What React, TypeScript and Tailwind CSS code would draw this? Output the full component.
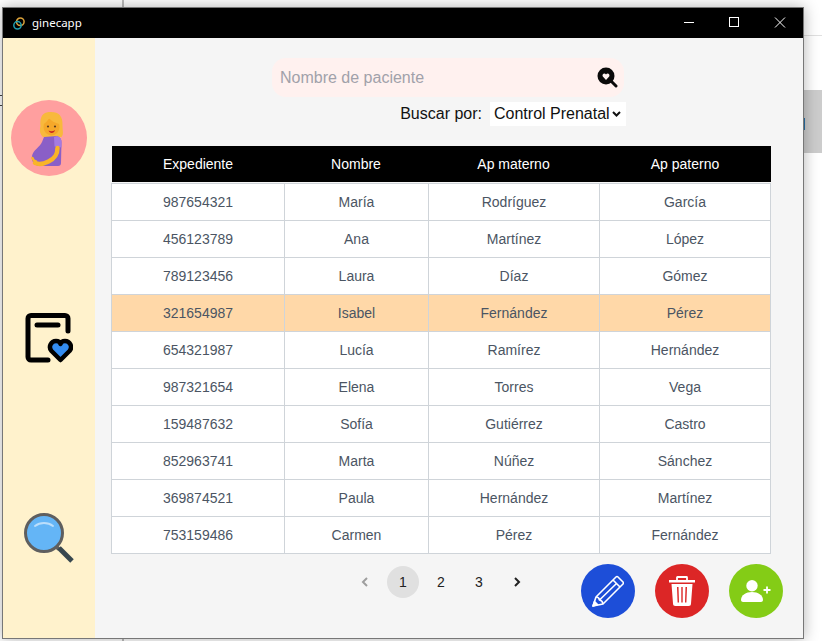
import React from "react";

const rows = [
  ["987654321", "María", "Rodríguez", "García"],
  ["456123789", "Ana", "Martínez", "López"],
  ["789123456", "Laura", "Díaz", "Gómez"],
  ["321654987", "Isabel", "Fernández", "Pérez"],
  ["654321987", "Lucía", "Ramírez", "Hernández"],
  ["987321654", "Elena", "Torres", "Vega"],
  ["159487632", "Sofía", "Gutiérrez", "Castro"],
  ["852963741", "Marta", "Núñez", "Sánchez"],
  ["369874521", "Paula", "Hernández", "Martínez"],
  ["753159486", "Carmen", "Pérez", "Fernández"],
];

function Logo() {
  return (
    <svg width="12" height="13" viewBox="0 0 12 13" fill="none">
      <circle cx="7.300" cy="4.800" r="3.800" stroke="#dba23a" strokeWidth="1.500" />
      <circle cx="4.500" cy="8.300" r="3.700" stroke="#1f9fb0" strokeWidth="1.500" />
    </svg>
  );
}

function Pregnant() {
  return (
    <svg width="50" height="65" viewBox="0 0 50 65">
      <path d="M16.500 20C15.500 8 21 6 27 6c8 0 12 4 11.500 14 0 5 1.500 8-1 11H19c-3.500-3-3.500-7-2.500-11z" fill="#f8b93c" />
      <ellipse cx="27.500" cy="21" rx="8" ry="8.500" fill="#f5a82a" />
      <path d="M19 18c3-1 5-4 6-6 2 3 6 5 10.500 6l-1-8-6-2-7 2z" fill="#f8b93c" />
      <circle cx="24" cy="20.500" r="1.100" fill="#5b3a1e" />
      <circle cx="31" cy="20.500" r="1.100" fill="#5b3a1e" />
      <path d="M24.500 24.500c2 1 4.500 1 6.500-.5-.5 3.500-5.500 4-6.500.5z" fill="#c8281e" />
      <path d="M20 31l13-1c3 1 4.500 3 4.500 6L37 57c0 2-1 3-3 3H17C10 60 7 55 8 50c1-6 8-9 10-14z" fill="#8a5fc7" />
      <path d="M30 31l3-1c3 1 4.500 3 4.500 6v5.500l-7-1z" fill="#a47be2" />
      <path d="M33.500 42c0 6-2 10-9 13.500-5 2.500-10 3-13.500 1.500" fill="none" stroke="#f9b428" strokeWidth="4.500" strokeLinecap="round" />
      <path d="M8.500 52c.5 2 1.500 3 3.500 3.500" fill="none" stroke="#f9b428" strokeWidth="2.500" strokeLinecap="round" />
    </svg>
  );
}

function ClipHeart() {
  return (
    <svg width="48" height="50" viewBox="0 0 48 50" fill="none">
      <path d="M23 47H6a3 3 0 0 1-3-3V5.500a3 3 0 0 1 3-3h34a3 3 0 0 1 3 3V18" stroke="#000" strokeWidth="5" strokeLinecap="round" />
      <path d="M12 12h21" stroke="#000" strokeWidth="5" strokeLinecap="round" />
      <path d="M35.500 47l-9-9c-3.500-4-.5-10 4.500-10 2 0 4 1 4.500 3 .5-2 2.500-3 4.500-3 5 0 8 6 4.500 10z" fill="#338cf0" stroke="#000" strokeWidth="4.500" strokeLinejoin="round" />
    </svg>
  );
}

function BigSearch() {
  return (
    <svg width="50" height="50" viewBox="0 0 50 50" fill="none">
      <path d="M31 33l4 3" stroke="#5f5f5f" strokeWidth="4" />
      <path d="M35 35l13 13" stroke="#37474f" strokeWidth="5" />
      <circle cx="20" cy="20" r="18.500" fill="#64b5f6" stroke="#5f5f5f" strokeWidth="3" />
      <path d="M11 13c5-4 13-4 18 0" stroke="#bbdefb" strokeWidth="2" strokeLinecap="round" />
    </svg>
  );
}

function SmallSearch() {
  return (
    <svg width="21" height="21" viewBox="0 0 21 21">
      <path d="M14 14l5 5" stroke="#0a0a0a" strokeWidth="3" strokeLinecap="round" />
      <circle cx="9" cy="9" r="8.500" fill="#0a0a0a" />
      <path d="M9 13L5.800 9.500C4.500 7.500 7.500 5.300 9 7.500 10.500 5.300 13.500 7.500 12.200 9.500z" fill="#fff3f1" />
    </svg>
  );
}

function Pencil() {
  return (
    <svg width="32" height="32" viewBox="0 0 32 32" fill="none" stroke="#fff" strokeWidth="1.600" strokeLinejoin="round">
      <path d="M1 31l3-9L24 2q1-1 2 0l5 5q1 1 0 2L11 29z" />
      <path d="M4 22q3 0 3.500 3 3 .5 3.500 4M21 5l7 7M7.500 25L25 8" />
      <path d="M1 31l1.500-4.500 3 3z" fill="#fff" />
    </svg>
  );
}

function Trash() {
  return (
    <svg width="26" height="30" viewBox="0 0 26 30" fill="#fff">
      <path d="M8 4V1.500q0-.5.500-.5h9q.5 0 .5.500V4" fill="none" stroke="#fff" strokeWidth="1.800" />
      <path d="M0 4h26v2.500H0z" />
      <path d="M2.500 8h21L22 27.500a2.500 2.500 0 0 1-2.500 2.500h-13A2.500 2.500 0 0 1 4 27.500zM8 11l.6 15.500h1.400L9.500 11zm4.300 0v15.500h1.400V11zm4.200 0L16 26.500h1.400L18 11z" fillRule="evenodd" />
    </svg>
  );
}

function UserPlus() {
  return (
    <svg width="30" height="22" viewBox="0 0 30 22" fill="#fff">
      <circle cx="11" cy="5.700" r="5.700" />
      <path d="M0 20c0-5 5-8 11-8s11 3 11 8c0 1-1 2-2 2H2c-1 0-2-1-2-2z" />
      <path d="M22.500 10h7M26 6.500v7" stroke="#fff" strokeWidth="1.800" />
    </svg>
  );
}

export default function App() {
  return (
    <div className="relative h-[641px] w-[822px] overflow-hidden bg-white font-['Liberation_Sans',sans-serif]">
      <div className="absolute left-[122px] top-0 h-full w-[2px] bg-[#bdbdbd]" />
      <div className="absolute left-0 top-[95px] h-[11px] w-[3px] border-y border-[#444]" />
      <div className="absolute right-0 top-[35px] h-px w-[30px] bg-[#e0e0e0]" />
      <div className="absolute right-0 top-[90px] h-[63px] w-[30px] bg-[#cccccc]" />
      <div className="absolute left-[803px] top-[118px] h-[12px] w-[2px] bg-[#2a72a8]" />

      <div className="absolute left-[2px] top-[7px] flex h-[632px] w-[802px] flex-col border border-[#777] shadow-[0_0_14px_rgba(0,0,0,0.3)]">
        <div className="flex h-[30px] shrink-0 items-center bg-black pl-[10px] text-white">
          <Logo />
          <span className="ml-[7px] font-['Noto_Sans',sans-serif] text-[11.5px] leading-none">ginecapp</span>
          <div className="ml-auto flex items-center">
            <svg width="46" height="30" viewBox="0 0 46 30" stroke="#fff" fill="none">
              <path d="M19 14.500h10" />
            </svg>
            <svg width="46" height="30" viewBox="0 0 46 30" stroke="#fff" fill="none">
              <rect x="18.500" y="9.500" width="9" height="9" />
            </svg>
            <svg width="46" height="30" viewBox="0 0 46 30" stroke="#fff" fill="none">
              <path d="M18 9.500l10 10M28 9.500l-10 10" />
            </svg>
          </div>
        </div>
        <div className="flex min-h-0 flex-1">
          <aside className="flex w-[92px] shrink-0 flex-col items-center bg-[#fff2cc] pt-[62px]">
            <div className="ml-[-1px] flex h-[76px] w-[76px] items-center justify-center rounded-full bg-[#ff9f9f]">
              <Pregnant />
            </div>
            <div className="mt-[137px]">
              <ClipHeart />
            </div>
            <div className="mt-[150px]">
              <BigSearch />
            </div>
          </aside>
          <main className="flex min-w-0 flex-1 flex-col bg-[#f5f5f5] pl-[16px] pr-[32px] pt-[20px]">
            <div className="ml-[161px] flex h-[39px] w-[352px] items-center rounded-[14px] bg-[#fff1ef] pl-[8px] pr-[3px]">
              <span className="text-[16px] text-[#a1a1aa]">Nombre de paciente</span>
              <span className="ml-auto mr-[3px]">
                <SmallSearch />
              </span>
            </div>
            <div className="mt-[5px] flex h-[24px] items-center justify-end pr-[145px]">
              <span className="text-[16px] text-[#111]">Buscar por:</span>
              <div className="ml-[8px] flex h-[24px] w-[136px] items-center bg-white pl-[4px]">
                <span className="text-[16px] text-[#111]">Control Prenatal</span>
                <svg className="ml-[2px]" width="9" height="7" viewBox="0 0 9 7" fill="none" stroke="#111" strokeWidth="2">
                  <path d="M1 1l3.500 3.500L8 1" />
                </svg>
              </div>
            </div>
            <div className="mt-[20px] w-[660px] shrink-0">
              <div className="ml-px grid h-[36px] grid-cols-[172px_144px_171px_172px] items-center bg-black text-center text-[14px] text-white">
                <span>Expediente</span>
                <span>Nombre</span>
                <span>Ap materno</span>
                <span>Ap paterno</span>
              </div>
              <div className="mt-px border-l border-[#cfd4d9]">
                {rows.map((r, i) => (
                  <div
                    key={r[0]}
                    className={
                      i === 3
                        ? "grid h-[37px] grid-cols-[173px_144px_171px_171px] border-t border-[#cfd4d9] bg-[#ffd8a8] text-center text-[14px] text-[#4b5563]"
                        : "grid h-[37px] grid-cols-[173px_144px_171px_171px] border-t border-[#cfd4d9] bg-white text-center text-[14px] text-[#4b5563] last:h-[38px] last:border-b"
                    }
                  >
                    {r.map((c) => (
                      <div key={c} className="flex items-center justify-center border-r border-[#cfd4d9]">
                        {c}
                      </div>
                    ))}
                  </div>
                ))}
              </div>
            </div>
            <div className="mt-[9px] flex h-[55px] items-start">
              <div className="ml-[248px] mt-[3px] flex items-center text-[14px] text-[#222]">
                <svg className="mr-[16px]" width="12" height="12" viewBox="0 0 12 12" fill="none" stroke="#9e9e9e" strokeWidth="2">
                  <path d="M8 2L4 6l4 4" />
                </svg>
                <span className="flex h-[32px] w-[32px] items-center justify-center rounded-full bg-[#e0e0e0]">1</span>
                <span className="ml-[6px] flex h-[32px] w-[32px] items-center justify-center">2</span>
                <span className="ml-[6px] flex h-[32px] w-[32px] items-center justify-center">3</span>
                <svg className="ml-[16px]" width="12" height="12" viewBox="0 0 12 12" fill="none" stroke="#222" strokeWidth="2">
                  <path d="M4 2l4 4-4 4" />
                </svg>
              </div>
              <div className="ml-auto mr-[-12px] mt-px flex gap-[20px]">
                <div className="flex h-[54px] w-[54px] items-center justify-center rounded-full bg-[#1d4ed8]">
                  <Pencil />
                </div>
                <div className="flex h-[54px] w-[54px] items-center justify-center rounded-full bg-[#dc2626]">
                  <Trash />
                </div>
                <div className="flex h-[54px] w-[54px] items-center justify-center rounded-full bg-[#84cc16]">
                  <UserPlus />
                </div>
              </div>
            </div>
          </main>
        </div>
      </div>
    </div>
  );
}
